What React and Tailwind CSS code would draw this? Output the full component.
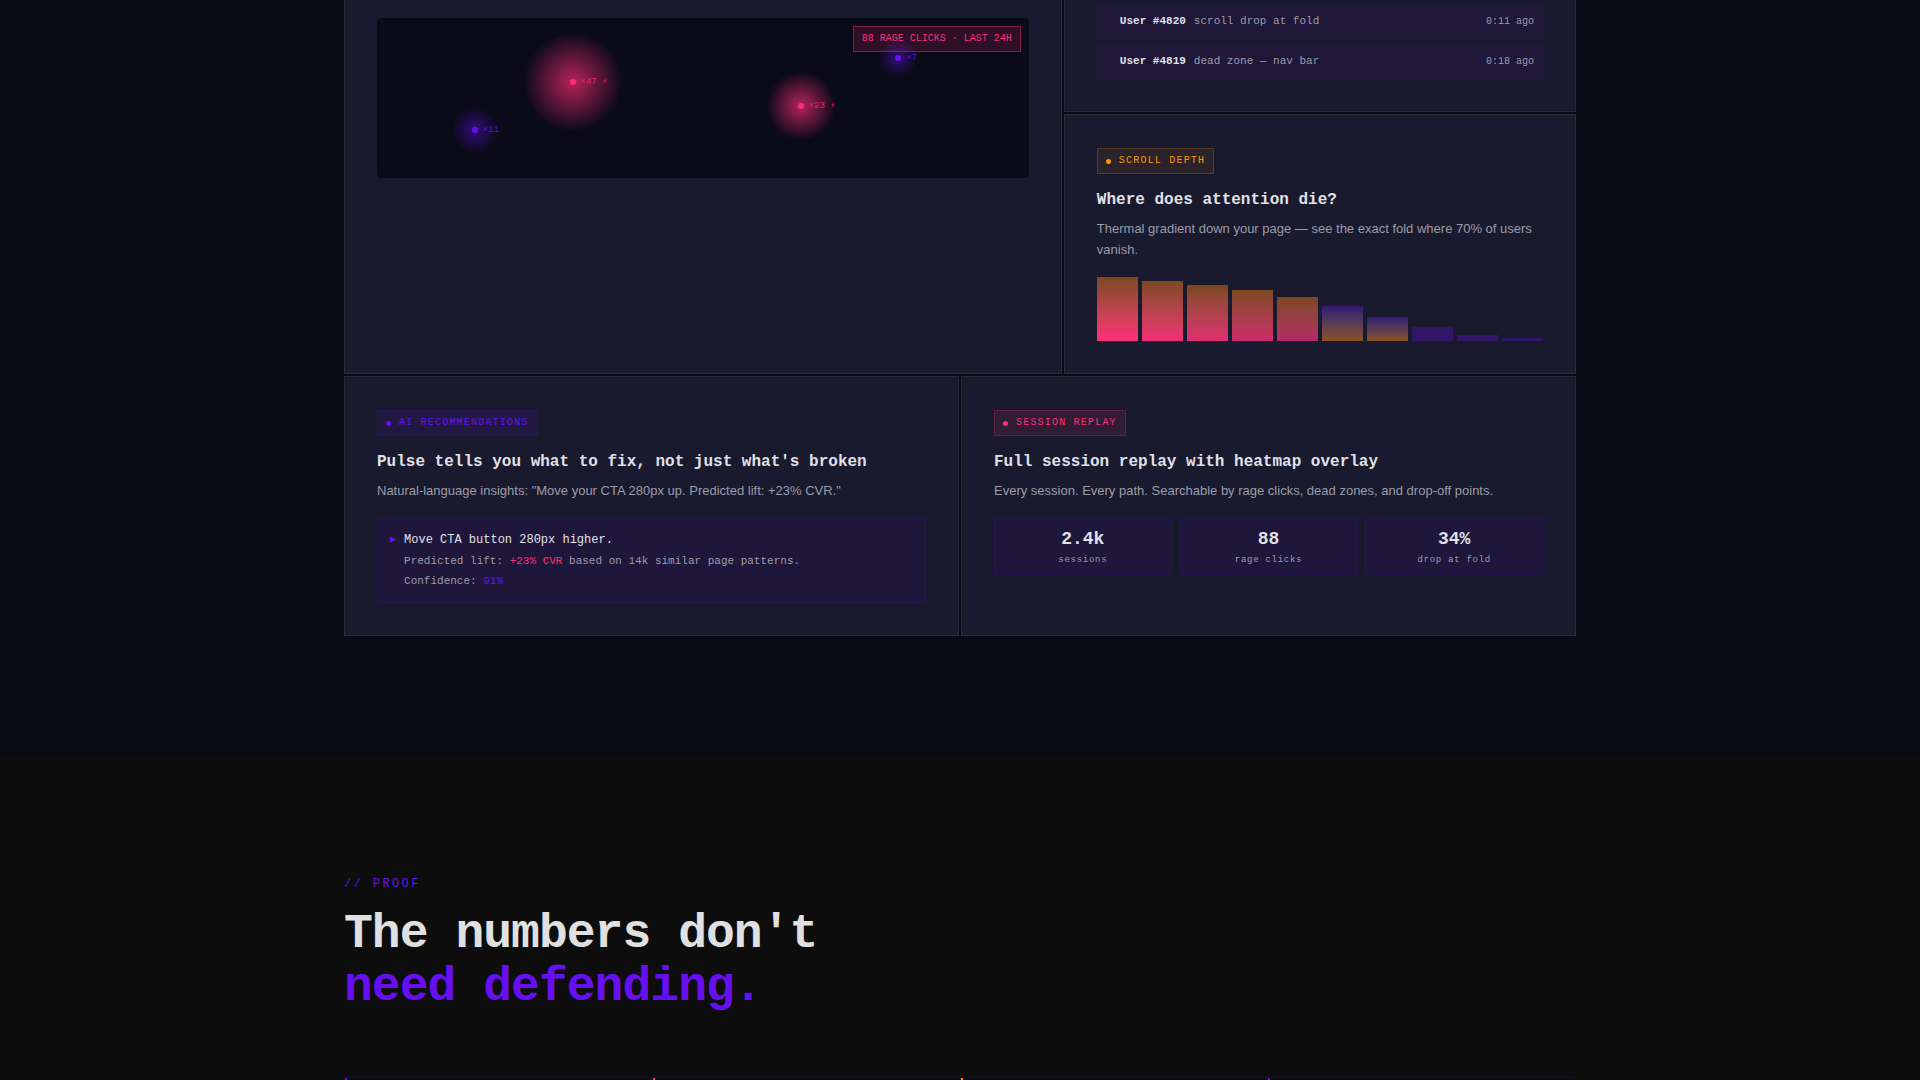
import clsx from 'clsx';

const tagTones = {
  pink: { box: 'border-[#ff2d78]/25 bg-[#ff2d78]/10 text-[#ff2d78]', dot: 'bg-[#ff2d78]' },
  orange: { box: 'border-[#ff9500]/20 bg-[#ff9500]/8 text-[#ff9500]', dot: 'bg-[#ff9500]' },
  purple: { box: 'border-[#6610f2]/10 bg-[#6610f2]/10 text-[#6610f2]', dot: 'bg-[#6610f2]' },
};

const hotspots = [
  { label: '×47 ⚡', left: '30%', top: '40%', size: 100, tone: 'pink' },
  { label: '×23 ⚡', left: '65%', top: '55%', size: 70, tone: 'pink' },
  { label: '×11', left: '15%', top: '70%', size: 48, tone: 'purple' },
  { label: '×7', left: '80%', top: '25%', size: 40, tone: 'purple' },
];

const spotTones = {
  pink: {
    glow: 'bg-[radial-gradient(circle,rgba(255,45,120,0.7)_0%,transparent_70%)]',
    dot: 'bg-[#ff2d78]',
    text: 'text-[#ff2d78]',
  },
  purple: {
    glow: 'bg-[radial-gradient(circle,rgba(102,16,242,0.45)_0%,transparent_70%)]',
    dot: 'bg-[#6610f2]',
    text: 'text-[#6610f2]',
  },
};

const feed = [
  { user: 'User #4820', event: 'scroll drop at fold', time: '0:11 ago' },
  { user: 'User #4819', event: 'dead zone — nav bar', time: '0:18 ago' },
];

const depthBars = [
  { height: 64, fill: 'from-[#ff2d78] to-[#7d4720]' },
  { height: 60, fill: 'from-[#f32c76] to-[#7d4720]' },
  { height: 56, fill: 'from-[#e12b72] to-[#7d4720]' },
  { height: 51, fill: 'from-[#cd2a6c] to-[#7d4720]' },
  { height: 44, fill: 'from-[#b52966] to-[#7d4720]' },
  { height: 35, fill: 'from-[#8a501d] to-[#321670]' },
  { height: 24, fill: 'from-[#8a501d] to-[#321670]' },
  { height: 14, fill: 'from-[#311569] to-[#311569]' },
  { height: 6, fill: 'from-[#311569] to-[#311569]' },
  { height: 3, fill: 'from-[#311569] to-[#311569]' },
];

const replayStats = [
  { value: '2.4k', label: 'sessions' },
  { value: '88', label: 'rage clicks' },
  { value: '34%', label: 'drop at fold' },
];

const proofAccents = ['bg-[#6610f2]', 'bg-[#ff2d78]', 'bg-[#ff9500]', 'bg-[#6610f2]'];

function Card({ className, children }) {
  return (
    <article className={clsx('border border-[#2a2a3b] bg-[#1a1a2e] px-8', className)}>
      {children}
    </article>
  );
}

function Tag({ tone, children }) {
  return (
    <div
      className={clsx(
        'mb-4 flex w-fit items-center gap-2 border px-2 py-1 text-[10px] leading-4 tracking-[0.12em] whitespace-nowrap',
        tagTones[tone].box
      )}
    >
      <span className={clsx('mt-px size-[5px] rounded-full', tagTones[tone].dot)} />
      {children}
    </div>
  );
}

function CardCopy({ title, children }) {
  return (
    <>
      <h3 className="mb-2 text-base leading-5 font-bold">{title}</h3>
      <p className="mb-[17px] font-['Liberation_Sans',sans-serif] text-[13px] leading-[21px] text-[#9b9ba9]">
        {children}
      </p>
    </>
  );
}

function Heatmap() {
  return (
    <div className="relative h-40 overflow-hidden rounded bg-[#0a0a18]">
      {hotspots.map(spot => {
        const tone = spotTones[spot.tone];
        return (
          <div key={spot.label} className="absolute" style={{ left: spot.left, top: spot.top }}>
            <div
              className={clsx('absolute -translate-1/2 rounded-full', tone.glow)}
              style={{ width: spot.size, height: spot.size }}
            />
            <div className={clsx('absolute size-1.5 -translate-1/2 rounded-full', tone.dot)} />
            <span
              className={clsx(
                'absolute left-2 -translate-y-1/2 text-[9px] leading-[14px] whitespace-nowrap opacity-80',
                tone.text
              )}
            >
              {spot.label}
            </span>
          </div>
        );
      })}
      <div className="absolute top-2 right-2 border border-[#ff2d78]/40 bg-[#ff2d78]/15 px-2 py-1 text-[10px] leading-4 text-[#ff2d78]">
        88 RAGE CLICKS · LAST 24H
      </div>
    </div>
  );
}

function LiveFeed() {
  return (
    <ul className="flex flex-col gap-[3px]">
      {feed.map(row => (
        <li
          key={row.user}
          className="flex items-baseline gap-2 rounded-xs bg-[#1f1838] py-[9px] pr-[9px] pl-[23px] text-[11px] leading-[18px] text-[#9b9ba9]"
        >
          <strong className="text-[#e0e0e8]">{row.user}</strong>
          <span>{row.event}</span>
          <time className="ml-auto text-[10px]">{row.time}</time>
        </li>
      ))}
    </ul>
  );
}

function DepthChart() {
  return (
    <div className="flex h-16 items-end gap-1">
      {depthBars.map(bar => (
        <div
          key={bar.height}
          className={clsx('flex-1 bg-linear-to-t', bar.fill)}
          style={{ height: bar.height }}
        />
      ))}
    </div>
  );
}

function Recommendation() {
  return (
    <div className="flex gap-2 border border-[#6610f2]/10 bg-[#1f173b] px-3 py-[11px]">
      <span className="text-[10px] leading-5 text-[#6610f2]">▶</span>
      <div className="text-[11px] leading-5 text-[#9b9ba9]">
        <p className="mb-px text-xs leading-5 text-[#e0e0e8]">Move CTA button 280px higher.</p>
        <p>
          Predicted lift: <span className="text-[#ff2d78]">+23% CVR</span> based on 14k similar page
          patterns.
        </p>
        <p>
          Confidence: <span className="text-[#6610f2]">91%</span>
        </p>
      </div>
    </div>
  );
}

function ReplayStats() {
  return (
    <div className="grid grid-cols-3 gap-2">
      {replayStats.map(stat => (
        <div
          key={stat.label}
          className="border border-[#6610f2]/10 bg-[#1f173b] px-2 pt-2 pb-1.5 text-center"
        >
          <div className="text-lg leading-[25px] font-bold">{stat.value}</div>
          <div className="text-[9px] leading-4 tracking-[0.08em] text-[#9b9ba9]">{stat.label}</div>
        </div>
      ))}
    </div>
  );
}

export default function App() {
  return (
    <div className="h-screen overflow-hidden bg-[#0d0d0d] font-['Liberation_Mono',monospace] text-[#e0e0e8]">
      <section className="bg-[#0a0a14] px-6 pb-[120px]">
        <div className="mx-auto grid max-w-[1232px] grid-cols-12 gap-0.5">
          <Card className="col-span-7 row-span-2 border-t-0 pt-[18px] pb-8">
            <Heatmap />
          </Card>
          <Card className="col-span-5 border-t-0 pt-[3px] pb-[31px]">
            <LiveFeed />
          </Card>
          <Card className="col-span-5 pt-[33px] pb-8">
            <Tag tone="orange">SCROLL DEPTH</Tag>
            <CardCopy title="Where does attention die?">
              Thermal gradient down your page — see the exact fold where 70% of users vanish.
            </CardCopy>
            <DepthChart />
          </Card>
          <Card className="col-span-6 pt-[33px] pb-8">
            <Tag tone="purple">AI RECOMMENDATIONS</Tag>
            <CardCopy title="Pulse tells you what to fix, not just what's broken">
              Natural-language insights: "Move your CTA 280px up. Predicted lift: +23% CVR."
            </CardCopy>
            <Recommendation />
          </Card>
          <Card className="col-span-6 pt-[33px] pb-8">
            <Tag tone="pink">SESSION REPLAY</Tag>
            <CardCopy title="Full session replay with heatmap overlay">
              Every session. Every path. Searchable by rage clicks, dead zones, and drop-off points.
            </CardCopy>
            <ReplayStats />
          </Card>
        </div>
      </section>

      <section className="px-6 py-[119px]">
        <div className="mx-auto max-w-[1232px]">
          <p className="mb-[15px] text-xs leading-[18px] tracking-[0.2em] text-[#6610f2]">
            // PROOF
          </p>
          <h2 className="mb-[63px] text-5xl leading-[53px] font-bold tracking-[-0.02em] text-[#e0e0e0]">
            The numbers don't
            <br />
            <span className="text-[#6610f2]">need defending.</span>
          </h2>
          <div className="grid grid-cols-4 gap-px border border-[#14101f] bg-[#14101f]">
            {proofAccents.map((accent, i) => (
              <div key={i} className="h-40 bg-[#0a0a14]">
                <div className={clsx('h-full w-0.5', accent)} />
              </div>
            ))}
          </div>
        </div>
      </section>
    </div>
  );
}
